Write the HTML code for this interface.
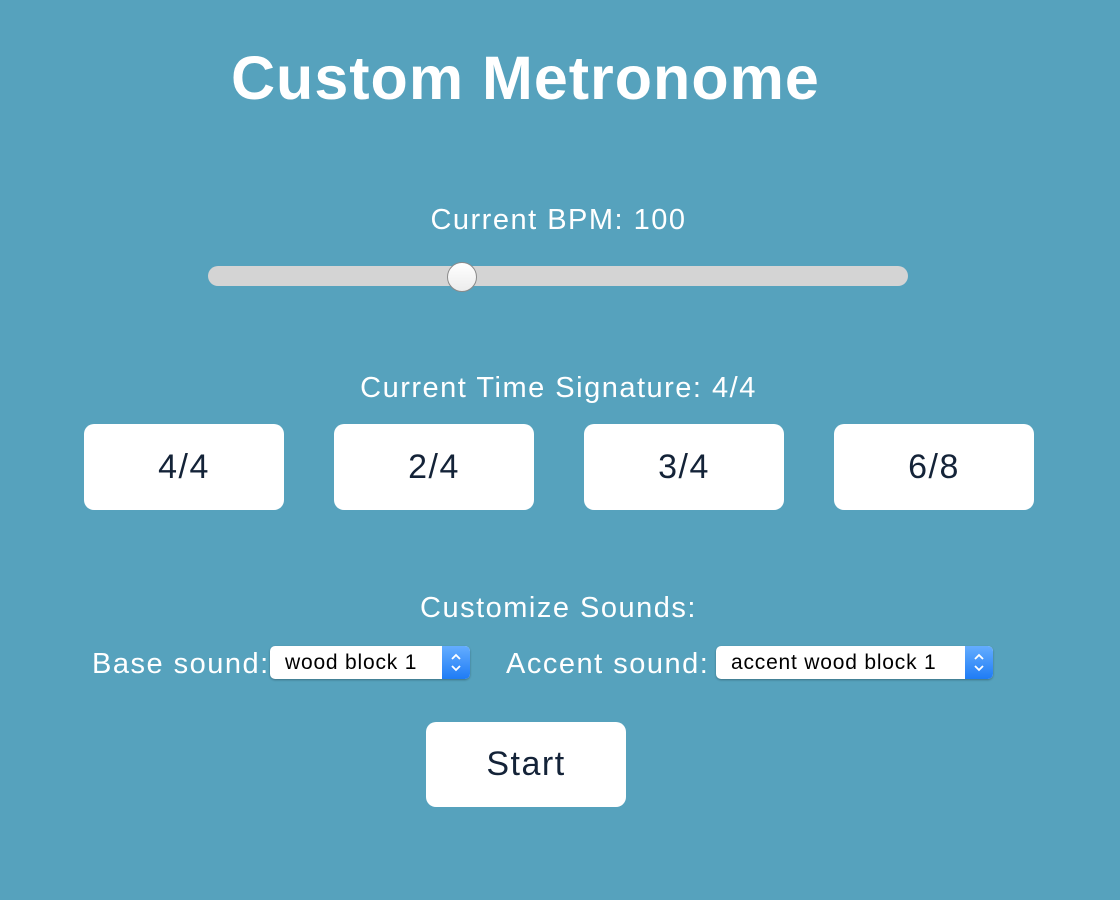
<!DOCTYPE html>
<html><head><style>
body{margin:0;width:1120px;height:900px;background:#56a2bd;font-family:"Liberation Sans",sans-serif;color:#fff;position:relative;overflow:hidden}
.a{position:absolute;white-space:nowrap}
.t{font-weight:bold;font-size:61px;left:231px;top:43px;letter-spacing:1px}
.c{font-size:29px;left:0;width:1117px;text-align:center;letter-spacing:1.5px}
.btn{position:absolute;background:#fff;border-radius:10px;width:200px;height:86px;color:#142338;font-size:34px;text-align:center;line-height:86px;letter-spacing:1.5px}
.sel{position:absolute;background:#fff;border-radius:5px;height:33px;color:#000;font-size:21px;line-height:33px;box-shadow:0 1px 2px rgba(0,0,0,.3);letter-spacing:0.8px}
.sel span{padding-left:15px}
.arr{position:absolute;right:0;top:0;width:28px;height:33px;background:linear-gradient(#64adff,#1f7cf5);border-radius:0 5px 5px 0}
.l{font-size:29px;letter-spacing:1.5px}
</style></head><body>
<div class="a t">Custom Metronome</div>
<div class="a c" style="top:204px">Current BPM: 100</div>
<div class="a" style="left:208px;top:266px;width:700px;height:20px;border-radius:10px;background:#d4d4d4"></div>
<div class="a" style="left:447px;top:262px;width:28px;height:28px;border-radius:50%;background:linear-gradient(#fff,#ececec);border:1.5px solid #8a8a8a"></div>
<div class="a c" style="top:372px">Current Time Signature: 4/4</div>
<div class="btn" style="left:84px;top:424px">4/4</div>
<div class="btn" style="left:334px;top:424px">2/4</div>
<div class="btn" style="left:584px;top:424px">3/4</div>
<div class="btn" style="left:834px;top:424px">6/8</div>
<div class="a c" style="top:592px">Customize Sounds:</div>
<div class="a l" style="left:92px;top:648px">Base sound:</div>
<div class="sel" style="left:270px;top:646px;width:200px"><span>wood block 1</span><div class="arr"><svg width="28" height="33"><path d="M10 13l4-4 4 4M10 20l4 4 4-4" fill="none" stroke="#fff" stroke-width="1.8"/></svg></div></div>
<div class="a l" style="left:506px;top:648px">Accent sound:</div>
<div class="sel" style="left:716px;top:646px;width:277px"><span>accent wood block 1</span><div class="arr"><svg width="28" height="33"><path d="M10 13l4-4 4 4M10 20l4 4 4-4" fill="none" stroke="#fff" stroke-width="1.8"/></svg></div></div>
<div class="btn" style="left:426px;top:722px;height:85px;line-height:85px">Start</div>
</body></html>
